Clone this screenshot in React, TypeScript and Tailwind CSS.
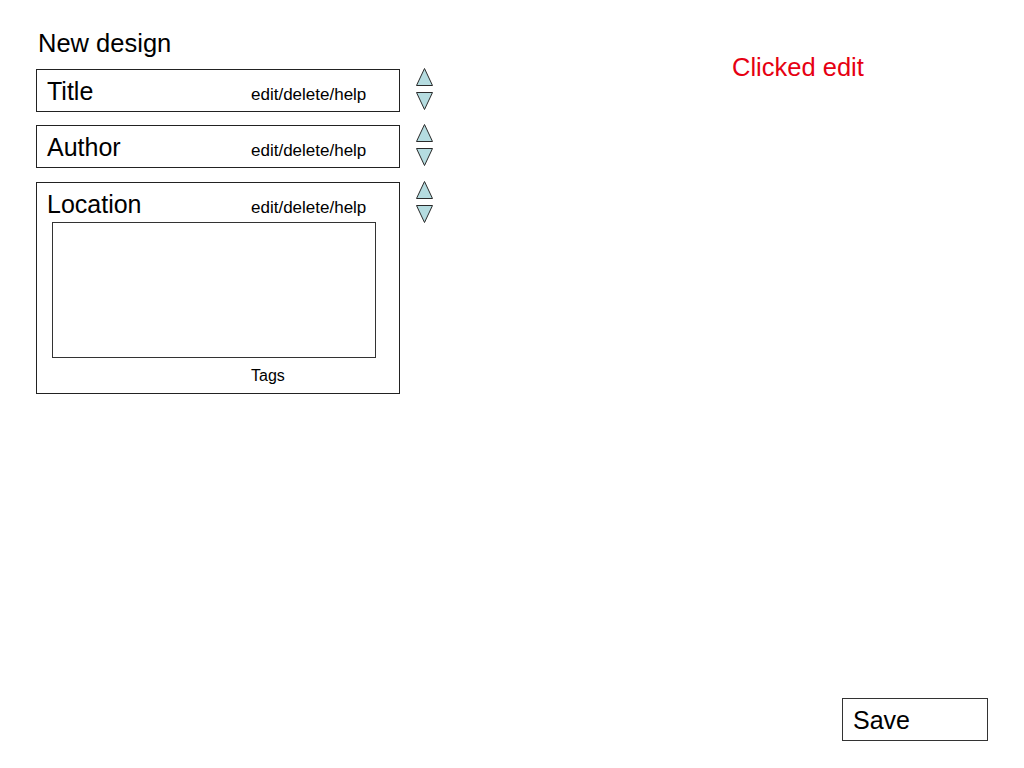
import React from "react";

function Arrows() {
  return (
    <div className="flex flex-col gap-[6px] -mt-[1px]">
      <svg width="17" height="18" viewBox="0 0 17 18">
        <polygon points="8.5,0.5 16.5,17.5 0.5,17.5" fill="#b5dce0" stroke="#2a2a2a" strokeWidth="1" />
      </svg>
      <svg width="17" height="18" viewBox="0 0 17 18">
        <polygon points="0.5,0.5 16.5,0.5 8.5,17.5" fill="#b5dce0" stroke="#2a2a2a" strokeWidth="1" />
      </svg>
    </div>
  );
}

function FieldHeader({ label }: { label: string }) {
  return (
    <div className="flex items-baseline">
      <span className="w-[204px] text-[25px] leading-[29px]">{label}</span>
      <span className="text-[17px] leading-[20px]">edit/delete/help</span>
    </div>
  );
}

function Field({ label, children }: { label: string; children?: React.ReactNode }) {
  return (
    <div className="flex items-start gap-[16px]">
      <div className={`w-[364px] border border-[#222] pl-[10px] pt-[7px] ${children ? "pb-[8px]" : "h-[43px]"}`}>
        <FieldHeader label={label} />
        {children}
      </div>
      <Arrows />
    </div>
  );
}

export default function App() {
  return (
    <div className="h-screen w-full flex flex-col bg-white text-black font-['Liberation_Sans',Arial,sans-serif] pl-[36px] pr-[36px] pt-[29px] pb-[27px]">
      <div className="flex">
        <div className="w-[400px]">
          <h1 className="text-[25.5px] leading-[29px] pl-[2px]">New design</h1>
          <div className="mt-[11px] flex flex-col">
            <Field label="Title" />
            <div className="mt-[13px]">
              <Field label="Author" />
            </div>
            <div className="mt-[14px]">
              <Field label="Location">
                <div className="ml-[5px] mt-[3px] w-[324px] h-[136px] border border-[#333]" />
                <div className="mt-[9px] pl-[204px] text-[16px] leading-[18px]">Tags</div>
              </Field>
            </div>
          </div>
        </div>
        <div className="ml-[296px] pt-[24px] text-[25.5px] leading-[29px] text-[#e60012]">Clicked edit</div>
      </div>
      <div className="mt-auto flex justify-end">
        <div className="w-[146px] h-[43px] border border-[#333] pl-[10px] pt-[7px] text-[25px] leading-[29px]">Save</div>
      </div>
    </div>
  );
}
